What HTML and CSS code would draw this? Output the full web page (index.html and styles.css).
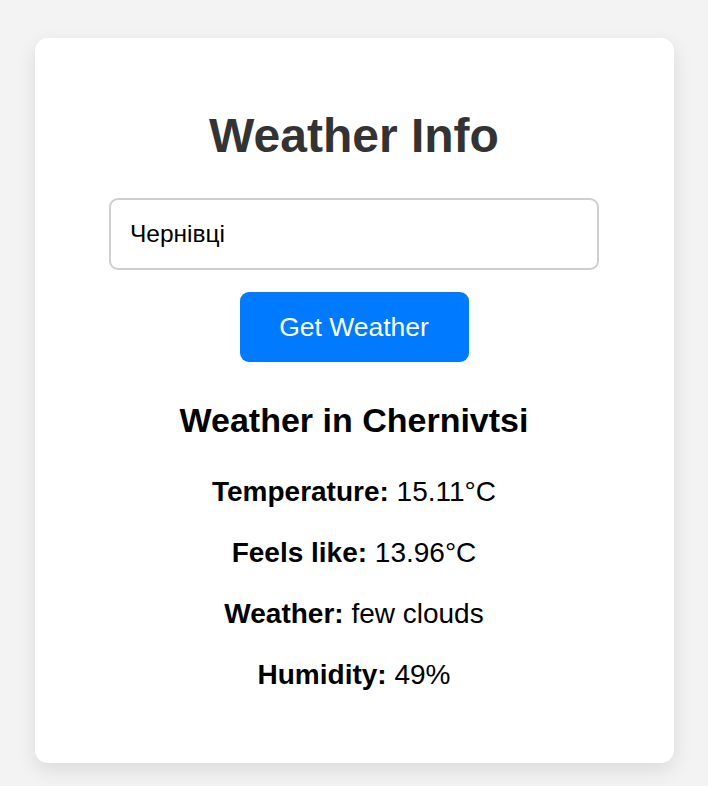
FILE: index.html
```html
<!DOCTYPE html>
<html lang="uk">
<head>
<meta charset="utf-8">
<title>Weather Info</title>
<link rel="stylesheet" href="styles.css">
</head>
<body>
<main class="card">
  <h1 class="title">Weather Info</h1>
  <input class="city-input" type="text" value="Чернівці">
  <button class="get-btn" type="button">Get Weather</button>
  <section class="result">
    <h3 class="result-title">Weather in Chernivtsi</h3>
    <p class="row"><strong>Temperature:</strong> 15.11°C</p>
    <p class="row"><strong>Feels like:</strong> 13.96°C</p>
    <p class="row"><strong>Weather:</strong> few clouds</p>
    <p class="row"><strong>Humidity:</strong> 49%</p>
  </section>
</main>
</body>
</html>
```
FILE: styles.css
```css
* { box-sizing: border-box; }
html, body { margin: 0; padding: 0; }
body {
  background: #f3f3f3;
  font-family: "Liberation Sans", Arial, sans-serif;
  color: #000;
  padding-top: 38px;
  min-height: 786px;
}
.card {
  width: 639px;
  margin: 0 auto;
  background: #fff;
  border-radius: 13px;
  box-shadow: 0 7px 20px rgba(0, 0, 0, 0.1);
  padding: 70px 35px 72px;
  display: flex;
  flex-direction: column;
  align-items: center;
  text-align: center;
}
.title {
  margin: 0;
  font-size: 48px;
  line-height: 56px;
  font-weight: 700;
  color: #333;
}
.city-input {
  margin-top: 34px;
  width: 490px;
  height: 72px;
  border: 2px solid #cfcfcf;
  border-radius: 9px;
  padding: 0 19px;
  font-family: "Liberation Sans", Arial, sans-serif;
  font-size: 24.5px;
  color: #000;
  background: #fff;
  outline: none;
}
.get-btn {
  margin-top: 22px;
  width: 229px;
  height: 70px;
  border: none;
  border-radius: 9px;
  background: #007bff;
  color: #fff;
  font-family: "Liberation Sans", Arial, sans-serif;
  font-size: 26.5px;
  cursor: pointer;
}
.result {
  margin-top: 38px;
  display: flex;
  flex-direction: column;
  align-items: center;
}
.result-title {
  margin: 0;
  font-size: 34px;
  line-height: 40px;
  font-weight: 700;
}
.row {
  margin: 29px 0 0;
  font-size: 28px;
  line-height: 32px;
}
.result-title + .row { margin-top: 36px; }
```
